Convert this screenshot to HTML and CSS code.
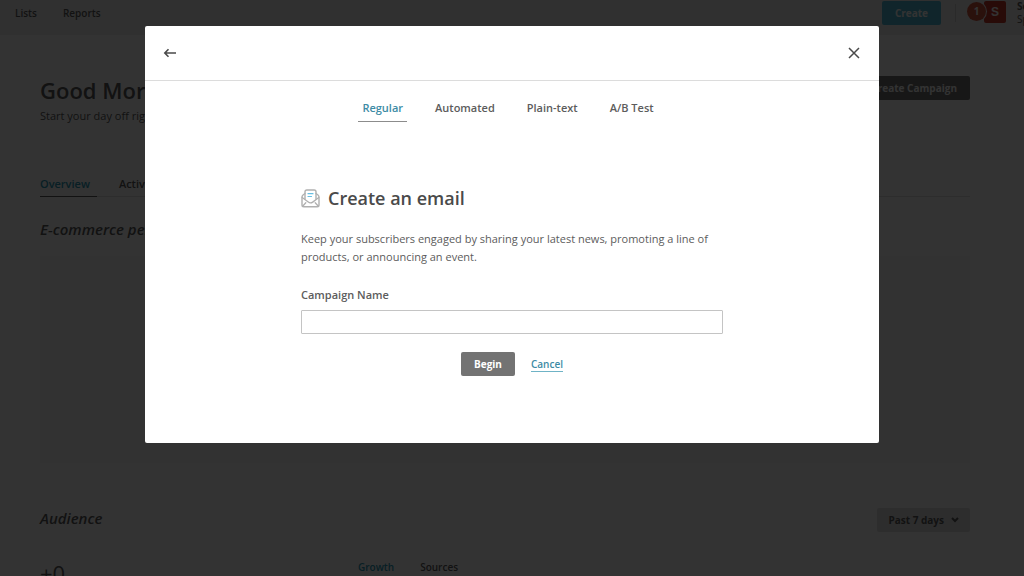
FILE: index.html
```html
<!DOCTYPE html>
<html lang="en">
  <head>
    <meta charset="UTF-8" />
    <meta name="viewport" content="width=device-width, initial-scale=1.0" />
    <title>Create an email</title>
    <link rel="stylesheet" href="styles.css">
  </head>
  <body>
    <!-- Top bar -->
    <header class="topbar">
      <nav class="topbar-nav">
        <a href="#">Lists</a>
        <a href="#">Reports</a>
      </nav>
      <div class="topbar-right">
        <button type="button" class="btn btn-create">Create</button>
        <span class="divider"></span>
        <div class="account">
          <span class="avatar">S</span>
          <span class="badge">1</span>
        </div>
        <div class="account-name">
          <strong>Se</strong>
          <span>Sp</span>
        </div>
      </div>
    </header>

    <!-- Dashboard -->
    <main class="dashboard">
      <div class="title-row">
        <div>
          <h1>Good Morning</h1>
          <p class="subtitle">Start your day off right</p>
        </div>
        <button type="button" class="btn btn-campaign">Create Campaign</button>
      </div>
      <nav class="page-tabs">
        <a href="#" class="active">Overview</a>
        <a href="#">Activity</a>
      </nav>
      <h2>E-commerce performance</h2>
      <div class="panel"></div>
      <div class="audience-row">
        <h2>Audience</h2>
        <button type="button" class="btn btn-range">
          Past 7 days
          <svg width="8" height="6" viewBox="0 0 8 6"><path d="M1 1l3 3 3-3" fill="none" stroke="currentColor" stroke-width="2" /></svg>
        </button>
      </div>
      <div class="audience-stats">
        <div class="stat">+0</div>
        <nav class="stat-tabs">
          <a href="#" class="active">Growth</a>
          <a href="#">Sources</a>
        </nav>
      </div>
    </main>

    <!-- Create dialog -->
    <div class="overlay">
      <div class="modal" role="dialog" aria-modal="true" aria-labelledby="modalTitle">
        <div class="modal-header">
          <button type="button" class="icon-btn" aria-label="Back">
            <svg width="14" height="12" viewBox="0 0 14 12"><path d="M13 6H2M5.500 2.300L1.800 6l3.700 3.700" fill="none" stroke="currentColor" stroke-width="1.600" /></svg>
          </button>
          <button type="button" class="icon-btn" aria-label="Close">
            <svg width="12" height="12" viewBox="0 0 12 12"><path d="M1 1l10 10M11 1L1 11" fill="none" stroke="currentColor" stroke-width="1.5" /></svg>
          </button>
        </div>
        <nav class="modal-tabs">
          <a href="#" class="active">Regular</a>
          <a href="#">Automated</a>
          <a href="#">Plain-text</a>
          <a href="#">A/B Test</a>
        </nav>
        <form class="modal-form">
          <h2 class="modal-title" id="modalTitle">
            <svg width="19" height="19" viewBox="0 0 19 19" fill="none" stroke-linecap="round" stroke-linejoin="round">
              <path d="M4 10V2.800Q4 1 5.800 1h7.400Q15 1 15 2.800V10" stroke="#b0b0b0" stroke-width="1.400" />
              <path d="M4 4.500L2 6Q1 6.800 1 8v8q0 1.800 1.800 1.800h13.400q1.800 0 1.800-1.800V8q0-1.200-1-2l-2-1.500" stroke="#b0b0b0" stroke-width="1.400" />
              <path d="M1.200 8.500l6.100 4.600q2.200 1.600 4.400 0l6.100-4.600M1.600 17.200l3.200-3.400M17.400 17.200l-3.200-3.400" stroke="#b0b0b0" stroke-width="1.300" />
              <path d="M7 4.700h5M7 7.500h3.500" stroke="#68bfe3" stroke-width="1.200" />
            </svg>
            Create an email
          </h2>
          <p>Keep your subscribers engaged by sharing your latest news, promoting a line of products, or announcing an event.</p>
          <label for="campaignName">Campaign Name</label>
          <input type="text" id="campaignName" />
          <div class="actions">
            <button type="button" class="btn btn-begin">Begin</button>
            <a href="#" class="cancel">Cancel</a>
          </div>
        </form>
      </div>
    </div>
  </body>
</html>
```
FILE: styles.css
```css
* {
  box-sizing: border-box;
}
body {
  font-family: "Open Sans", sans-serif;
  font-size: 11px;
  line-height: 18px;
  color: #5c5c5c;
  background-color: #fff;
  margin: 0;
  height: 100vh;
  overflow: hidden;
}
h1,
h2,
p {
  margin: 0;
}
a {
  color: inherit;
  text-decoration: none;
}
.btn {
  font-family: inherit;
  font-size: 10px;
  font-weight: 700;
  line-height: 16px;
  padding: 4px 13px;
  border: none;
  border-radius: 2px;
  color: #fff;
  cursor: pointer;
}
/* Top bar */
.topbar {
  display: flex;
  justify-content: space-between;
  height: 35px;
  padding-left: 15px;
  background-color: #f0f0f0;
}
.topbar-nav {
  display: flex;
  gap: 26px;
  padding-top: 4px;
  font-size: 10px;
  font-weight: 600;
}
.topbar-right {
  display: flex;
  align-items: flex-start;
}
.btn-create {
  margin-top: 1px;
  background-color: #52bad5;
}
.divider {
  width: 1px;
  height: 18px;
  margin: 4px 11px 0 14px;
  background-color: #d0d0d0;
}
.account {
  position: relative;
  display: flex;
  justify-content: flex-end;
  width: 39px;
  padding-top: 1px;
}
.avatar {
  width: 22px;
  border-radius: 2px;
  background-color: #c8392b;
  color: #fff;
  font: 700 12px/22px "Liberation Sans", sans-serif;
  text-align: center;
}
.badge {
  position: absolute;
  top: 2px;
  left: 0;
  width: 19px;
  height: 19px;
  border-radius: 50%;
  background-color: #d0563f;
  box-shadow: 0 0 0 1px #f0f0f0;
  color: #fff;
  font-size: 10px;
  font-weight: 700;
  line-height: 19px;
  text-align: center;
}
.account-name {
  display: flex;
  flex-direction: column;
  width: 18px;
  padding-left: 11px;
  overflow: hidden;
  font-size: 10px;
  line-height: 13px;
}
/* Dashboard */
.dashboard {
  padding: 40px 54px 0 40px;
}
.title-row {
  display: flex;
  justify-content: space-between;
  align-items: flex-start;
}
h1 {
  font-size: 22px;
  font-weight: 600;
  line-height: 30px;
}
.subtitle {
  margin-top: 2px;
}
.btn-campaign {
  margin-top: 1px;
  background-color: #737373;
}
.page-tabs {
  display: flex;
  gap: 22px;
  margin-top: 48px;
  border-bottom: 1px solid #e0e0e0;
  font-weight: 600;
}
.page-tabs a {
  margin-bottom: -1px;
  padding: 2px 7px 3px 0;
}
.page-tabs .active {
  border-bottom: 1px solid #5c5c5c;
}
.active {
  color: #2c9ab7;
}
.dashboard h2 {
  font-size: 15px;
  font-style: italic;
  font-weight: 600;
  line-height: 24px;
}
.page-tabs + h2 {
  margin-top: 20px;
}
.panel {
  height: 207px;
  margin-top: 15px;
  background-color: #fafafa;
}
.audience-row {
  display: flex;
  justify-content: space-between;
  align-items: flex-end;
  margin-top: 43px;
}
.audience-row h2 {
  align-self: flex-start;
}
.btn-range {
  display: flex;
  align-items: center;
  gap: 7px;
  margin-top: 2px;
  padding: 4px 11px;
  background-color: #e0e0e0;
  color: #5c5c5c;
}
.audience-stats {
  display: grid;
  grid-template-columns: 318px 1fr;
  margin-top: 26px;
}
.stat {
  font-size: 22px;
  line-height: 30px;
}
.stat-tabs {
  display: flex;
  gap: 26px;
  font-size: 10px;
  font-weight: 600;
}
/* Modal */
.overlay {
  position: fixed;
  inset: 0;
  padding: 26px 20px;
  background-color: rgba(0, 0, 0, 0.8);
}
.modal {
  max-width: 734px;
  margin: 0 auto;
  padding-bottom: 67px;
  border-radius: 2px;
  background-color: #fff;
}
.modal-header {
  display: flex;
  justify-content: space-between;
  align-items: center;
  height: 55px;
  padding: 0 19px 0 18px;
  border-bottom: 1px solid #dcdcdc;
}
.icon-btn {
  display: flex;
  padding: 0;
  border: none;
  background: none;
  color: #4a4a4a;
  cursor: pointer;
}
.modal-tabs {
  display: flex;
  justify-content: center;
  gap: 24px;
  margin-top: 18px;
  padding-right: 8px;
  font-weight: 600;
}
.modal-tabs a {
  padding: 0 4px 4px;
}
.modal-tabs .active {
  color: #3d8ba5;
  border-bottom: 1px solid #8c8c8c;
}
.modal-form {
  max-width: 422px;
  margin: 62px auto 0;
}
.modal-title {
  display: flex;
  align-items: center;
  gap: 8px;
  font-size: 18px;
  font-weight: 600;
  line-height: 28px;
  color: #4a4a4a;
}
.modal-form p {
  margin-top: 18px;
}
.modal-form label {
  display: block;
  margin-top: 20px;
  font-weight: 600;
}
.modal-form input {
  display: block;
  width: 100%;
  height: 24px;
  margin-top: 6px;
  padding: 0 8px;
  border: 1px solid #c4c4c4;
  border-radius: 1px;
  font: inherit;
}
.actions {
  display: flex;
  justify-content: center;
  align-items: center;
  gap: 16px;
  margin-top: 18px;
}
.btn-begin {
  background-color: #737373;
}
.cancel {
  border-bottom: 1px solid #6fb3c6;
  color: #3d8ba5;
  font-size: 10px;
  font-weight: 600;
  line-height: 14px;
}
```
